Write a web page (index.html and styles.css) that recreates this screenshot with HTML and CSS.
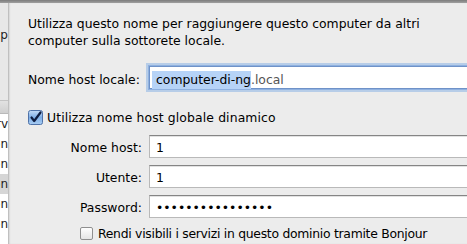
FILE: index.html
```html
<!DOCTYPE html>
<html lang="it">
<head>
    <meta charset="UTF-8">
    <meta name="viewport" content="width=device-width, initial-scale=1.0">
    <title>Nome host</title>
    <link rel="stylesheet" href="styles.css">
</head>
<body>
    <div class="topbar"></div>
    <div class="screen">
        <div class="behind">
            <div class="behind-top"><span>np</span></div>
            <div class="behind-head"></div>
            <div class="behind-row">Serv</div>
            <div class="behind-row">Con</div>
            <div class="behind-row">Con</div>
            <div class="behind-row picked">Con</div>
            <div class="behind-row">Con</div>
            <div class="behind-row">Con</div>
        </div>

        <div class="sheet">
            <p class="intro">Utilizza questo nome per raggiungere questo computer da altri computer sulla sottorete locale.</p>

            <div class="row local">
                <label class="label">Nome host locale:</label>
                <div class="field focused"><span class="sel">computer-di-ng</span><span class="suffix">.local</span></div>
            </div>

            <div class="check-row">
                <svg class="box" width="15" height="15" viewBox="0 0 15 15">
                    <defs>
                        <linearGradient id="blue" x1="0" y1="0" x2="0" y2="1">
                            <stop offset="0" stop-color="#c3daf6"/>
                            <stop offset="0.5" stop-color="#7eaee6"/>
                            <stop offset="1" stop-color="#a9cdf3"/>
                        </linearGradient>
                    </defs>
                    <rect x="0.5" y="0.5" width="14" height="14" rx="2" fill="url(#blue)" stroke="#4f72a8"/>
                    <path d="M3.5 7.5 L6.2 11 L12.5 2.5" fill="none" stroke="#0e1c40" stroke-width="2.2" stroke-linecap="round" stroke-linejoin="round"/>
                </svg>
                <span class="wide">Utilizza nome host globale dinamico</span>
            </div>

            <div class="form">
                <div class="row">
                    <label class="label right">Nome host:</label>
                    <div class="field">1</div>
                </div>
                <div class="row">
                    <label class="label right">Utente:</label>
                    <div class="field">1</div>
                </div>
                <div class="row">
                    <label class="label right">Password:</label>
                    <div class="field dots">••••••••••••••••</div>
                </div>
            </div>

            <div class="check-row sub">
                <svg class="box" width="13" height="13" viewBox="0 0 13 13">
                    <defs>
                        <linearGradient id="grey" x1="0" y1="0" x2="0" y2="1">
                            <stop offset="0" stop-color="#ffffff"/>
                            <stop offset="1" stop-color="#e4e4e4"/>
                        </linearGradient>
                    </defs>
                    <rect x="0.5" y="0.5" width="12" height="12" rx="1.5" fill="url(#grey)" stroke="#8f8f8f"/>
                </svg>
                <span class="tight">Rendi visibili i servizi in questo dominio tramite Bonjour</span>
            </div>
        </div>
    </div>
</body>
</html>
```

FILE: styles.css
```css
body {
    margin: 0;
    padding: 0;
    background-color: #ececec;
    color: #000;
    font-family: "DejaVu Sans", Verdana, sans-serif;
    font-size: 12.4px;
    line-height: 17px;
    width: 467px;
    height: 244px;
    overflow: hidden;
}

.topbar {
    height: 3px;
    background: linear-gradient(#7c7c7c, #a0a0a0);
}

.screen {
    display: flex;
    height: 241px;
}

/* window behind the sheet, only a sliver shows */
.behind {
    width: 8px;
    flex-shrink: 0;
    overflow: hidden;
    background-color: #fff;
    color: #222;
    font-size: 12px;
}

.behind-top {
    height: 97px;
    background-color: #e8e8e8;
    display: flex;
    justify-content: flex-end;
    padding-top: 24px;
    box-sizing: border-box;
}

.behind-head {
    height: 12px;
    background: linear-gradient(#e2e2e2, #cfcfcf);
    border-top: 1px solid #c4c4c4;
    border-bottom: 1px solid #b9b9b9;
}

.behind-row {
    height: 20px;
    display: flex;
    justify-content: flex-end;
    align-items: center;
}

.behind-row.picked {
    background-color: #d6d6d6;
}

.sheet {
    flex: 1;
    min-width: 0;
    overflow: hidden;
    padding: 12px 0 0 20px;
    background-color: #ececec;
    box-shadow: inset 2px 0 2px -1px rgba(0, 0, 0, 0.25);
}

.intro {
    margin: 0;
    width: 430px;
}

.row {
    display: flex;
    align-items: baseline;
    gap: 7px;
    margin-bottom: 7px;
}

.row.local {
    margin-top: 17px;
    margin-bottom: 0;
}

.label {
    width: 114px;
    flex-shrink: 0;
}

.label.right {
    text-align: right;
}

.field {
    flex: 1;
    margin-right: -6px;
    background-color: #fff;
    border: 1px solid #b9b9b9;
    border-top-color: #858585;
    box-shadow: inset 0 1px 0 #e2e2e2;
    padding: 3px 6px 1px 6px;
    white-space: nowrap;
}

.field.focused {
    padding: 4px 2px 0 2px;
    border-color: #6f92c8;
    box-shadow: 0 0 0 1px #8fb1e0, 0 0 0 3px rgba(140, 180, 230, 0.55);
}

.sel {
    background-color: #b6d3f7;
    padding: 1px 0 2px 4px;
}

.suffix {
    color: #555;
}

.check-row {
    display: flex;
    align-items: center;
    gap: 4px;
    margin-top: 20px;
    height: 17px;
}

.check-row .box {
    flex-shrink: 0;
}

.form {
    margin-top: 9px;
}

.check-row.sub {
    margin-top: 5px;
    padding-left: 52px;
    gap: 5px;
}

.wide {
    letter-spacing: 0.12px;
}

.tight {
    letter-spacing: -0.28px;
}
```
